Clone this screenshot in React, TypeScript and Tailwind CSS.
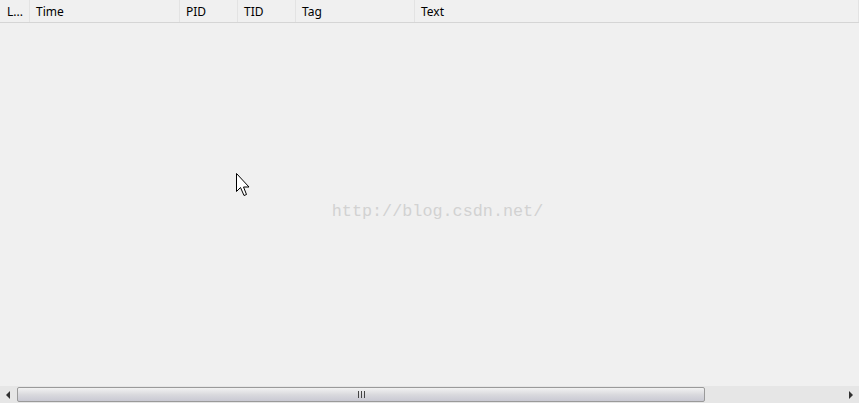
const columns = [
  { label: "L...", width: 30, pad: "pl-[7px]" },
  { label: "Time", width: 150, pad: "pl-[6px]" },
  { label: "PID", width: 58, pad: "pl-[6px]" },
  { label: "TID", width: 58, pad: "pl-[6px]" },
  { label: "Tag", width: 119, pad: "pl-[6px]" },
  { label: "Text", width: 444, pad: "pl-[6px]" },
];

export default function App() {
  return (
    <div className="relative flex h-[403px] w-[859px] flex-col overflow-hidden bg-[#f0f0f0] font-['Noto_Sans','Liberation_Sans',sans-serif] text-[12px] text-black">
      {/* Header */}
      <div className="flex h-[23px] shrink-0 border-b border-[#d5d5d5]">
        {columns.map((col) => (
          <div
            key={col.label}
            style={{ width: col.width }}
            className={`flex shrink-0 items-center border-r border-[#e3e3e3] pt-[1px] leading-none ${col.pad}`}
          >
            {col.label}
          </div>
        ))}
      </div>

      {/* Body */}
      <div className="relative flex flex-1 items-center justify-center">
        <span className="mt-[15px] ml-[16px] font-['Liberation_Mono',monospace] text-[16.8px] text-[#d2d2d2]">
          http://blog.csdn.net/
        </span>
        <svg
          className="absolute left-[236px] top-[150px]"
          width="16"
          height="25"
          viewBox="0 0 16 25"
        >
          <path
            d="M0.5 0.5 L0.5 18.5 L4.5 14.5 L8 22.5 L10.5 21.5 L7.5 14 L13 14 Z"
            fill="#fff"
            stroke="#000"
            strokeWidth="1"
          />
        </svg>
      </div>

      {/* Horizontal scrollbar */}
      <div className="flex h-[17px] shrink-0 items-stretch bg-[#e6e6e6]">
        <div className="flex w-[17px] items-center justify-center">
          <svg width="5" height="8" viewBox="0 0 5 8">
            <path d="M4 0 L0 4 L4 8 Z" fill="#303030" />
          </svg>
        </div>
        <div className="flex flex-1 py-[1px]">
          <div className="relative flex w-[688px] items-center justify-center rounded-[2px] border border-[#9a9a9a] bg-gradient-to-b from-[#f2f2f2] via-[#dadade] to-[#c9c9d3]">
            <div className="flex gap-[2px]">
              <div className="h-[7px] w-[1px] bg-[#444]" />
              <div className="h-[7px] w-[1px] bg-[#444]" />
              <div className="h-[7px] w-[1px] bg-[#444]" />
            </div>
          </div>
        </div>
        <div className="flex w-[17px] items-center justify-center">
          <svg width="5" height="8" viewBox="0 0 5 8">
            <path d="M1 0 L5 4 L1 8 Z" fill="#303030" />
          </svg>
        </div>
      </div>
    </div>
  );
}
